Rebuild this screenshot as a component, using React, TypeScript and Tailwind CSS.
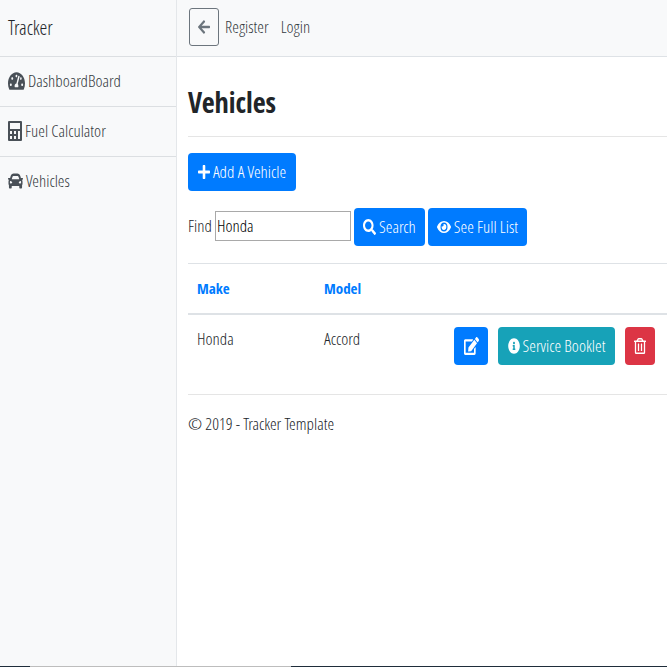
import React from "react";
import {
  FaArrowLeft,
  FaCar,
  FaEdit,
  FaEye,
  FaInfoCircle,
  FaPlus,
  FaRegTrashAlt,
  FaSearch,
  FaTachometerAlt,
} from "react-icons/fa";

function CalculatorIcon() {
  return (
    <svg className="h-5 w-[14px] text-[#495057]" viewBox="0 0 14 20" fill="currentColor" aria-hidden="true">
      <path
        fillRule="evenodd"
        d="M1 0h12a1 1 0 0 1 1 1v18a1 1 0 0 1-1 1H1a1 1 0 0 1-1-1V1a1 1 0 0 1 1-1zM2 2v6h10V2zM2 10v3h2v-3zM6 10v3h2v-3zM10 10v8h2v-8zM2 15v3h2v-3zM6 15v3h2v-3z"
      />
    </svg>
  );
}

const sideLink = "flex h-[50px] items-center gap-[3px] border-t border-[#dcdfe2] pb-[2px] pl-2 text-[#343a40]";
const button = "flex h-[38px] items-center justify-center gap-[3px] rounded text-white";

export default function App() {
  return (
    <div className="flex min-h-screen flex-col bg-white font-['Open_Sans_Condensed_Light','Roboto_Condensed',sans-serif] text-[17px] leading-6 text-[#212529]">
      <div className="flex flex-1">
        <aside className="w-[177px] shrink-0 border-r border-[#e4e7ea] bg-[#f8f9fa]">
          <div className="flex h-[56px] items-center pl-2 text-[20px]">Tracker</div>
          <nav>
            <a href="#dashboard" className={sideLink}>
              <FaTachometerAlt preserveAspectRatio="none" className="h-5 w-[17px] text-[#495057]" />
              DashboardBoard
            </a>
            <a href="#fuel" className={sideLink}>
              <CalculatorIcon />
              Fuel Calculator
            </a>
            <a href="#vehicles" className={sideLink}>
              <FaCar preserveAspectRatio="none" className="h-5 w-[15px] text-[#495057]" />
              Vehicles
            </a>
          </nav>
        </aside>

        <div className="min-w-0 flex-1">
          <header className="flex h-[57px] items-center border-b border-[#dee2e6] bg-[#f8f9fa] pb-[2px] pl-3">
            <button
              type="button"
              aria-label="Back"
              className="flex h-[38px] w-[30px] items-center justify-center rounded-[3px] border border-[#6c757d] text-[#6c757d]"
            >
              <FaArrowLeft preserveAspectRatio="none" className="h-4 w-3" />
            </button>
            <nav className="ml-[6px] flex gap-3 text-[#343a40]">
              <a href="#register">Register</a>
              <a href="#login">Login</a>
            </nav>
          </header>

          <main className="pl-[11px]">
            <h1 className="mt-[26px] font-['Open_Sans_Condensed','Roboto_Condensed',sans-serif] text-[28px] leading-[38px] font-bold">
              Vehicles
            </h1>
            <hr className="mt-[15px] border-[#e5e5e5]" />

            <div className="mt-4 flex">
              <a href="#add" className={`${button} w-[108px] bg-[#007bff]`}>
                <FaPlus preserveAspectRatio="none" className="h-4 w-3" />
                Add A Vehicle
              </a>
            </div>

            <form className="mt-[17px] flex items-center gap-[3px]" onSubmit={(e) => e.preventDefault()}>
              <label htmlFor="find" className="pb-[2px]">
                Find
              </label>
              <input
                id="find"
                defaultValue="Honda"
                className="mb-[3px] h-[30px] w-[136px] border border-[#a9a9a9] px-px text-black"
              />
              <button type="submit" className={`${button} w-[71px] bg-[#007bff]`}>
                <FaSearch preserveAspectRatio="none" className="h-4 w-[13px]" />
                Search
              </button>
              <a href="#all" className={`${button} w-[99px] bg-[#007bff]`}>
                <FaEye preserveAspectRatio="none" className="h-4 w-[14px]" />
                See Full List
              </a>
            </form>

            <table className="mt-[17px] w-full table-fixed border-collapse text-left">
              <thead>
                <tr className="h-[50px] border-t border-b-2 border-[#dee2e6] font-['Open_Sans_Condensed','Roboto_Condensed',sans-serif] text-[15px] text-[#007bff]">
                  <th className="w-[127px] pl-[9px] font-bold">
                    <a href="#make">Make</a>
                  </th>
                  <th className="w-[129px] pl-[9px] font-bold">
                    <a href="#model">Model</a>
                  </th>
                  <th aria-label="Actions" />
                </tr>
              </thead>
              <tbody>
                <tr>
                  <td className="pt-3 pl-[9px] align-top">Honda</td>
                  <td className="pt-3 pl-[9px] align-top">Accord</td>
                  <td className="py-3 pl-[10px]">
                    <div className="flex gap-[10px]">
                      <a href="#edit" aria-label="Edit" className={`${button} w-[34px] bg-[#007bff]`}>
                        <FaEdit preserveAspectRatio="none" className="h-[18px] w-[15px]" />
                      </a>
                      <a href="#service" className={`${button} w-[117px] bg-[#17a2b8]`}>
                        <FaInfoCircle preserveAspectRatio="none" className="h-4 w-3" />
                        Service Booklet
                      </a>
                      <a href="#delete" aria-label="Delete" className={`${button} w-[30px] bg-[#dc3545]`}>
                        <FaRegTrashAlt preserveAspectRatio="none" className="h-4 w-3" />
                      </a>
                    </div>
                  </td>
                </tr>
              </tbody>
            </table>

            <hr className="mt-[17px] border-[#e5e5e5]" />
            <footer className="mt-[17px]">© 2019 - Tracker Template</footer>
          </main>
        </div>
      </div>
      <div className="flex h-px">
        <div className="w-[30px] bg-[#1f2d3a]" />
        <div className="w-[261px] bg-[#bdbdbd]" />
        <div className="flex-1 bg-[#1f2d3a]" />
      </div>
    </div>
  );
}
